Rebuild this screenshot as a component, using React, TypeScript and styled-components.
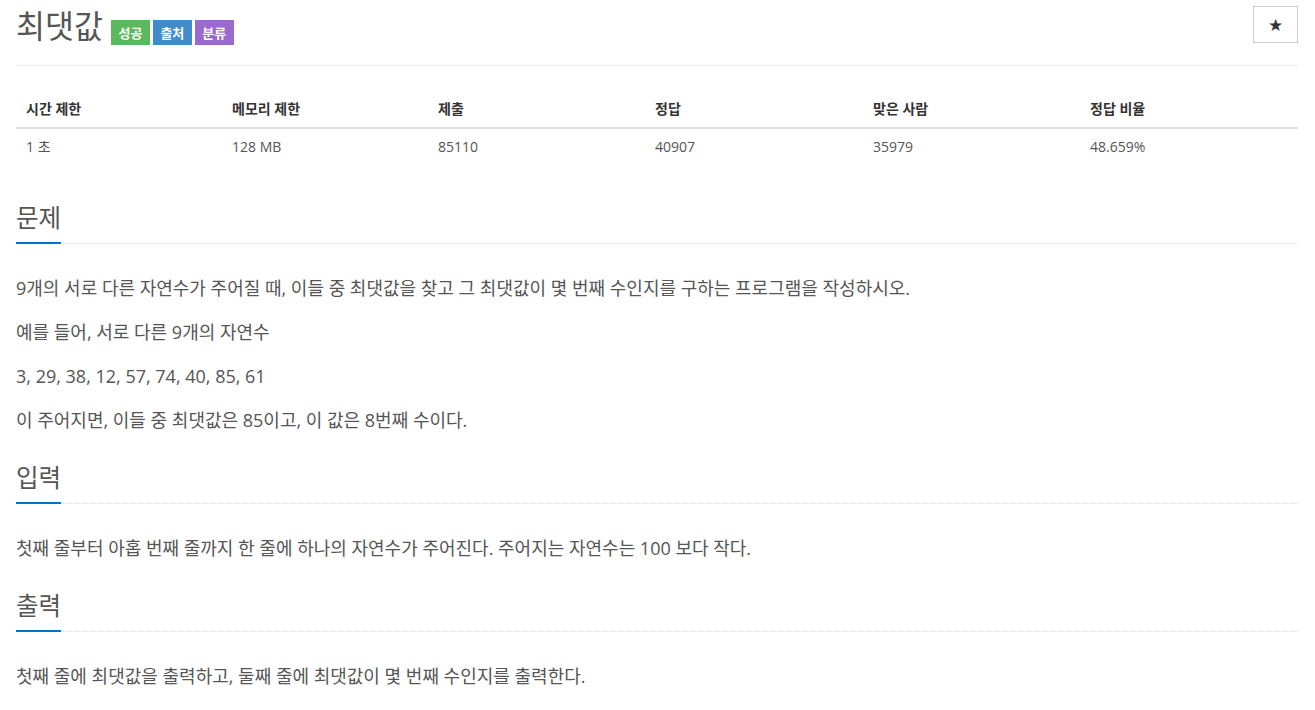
import React from 'react';
import styled, { createGlobalStyle } from 'styled-components';

const GlobalStyle = createGlobalStyle`
  html, body {
    margin: 0;
    padding: 0;
    background: #fff;
  }
  body {
    font-family: "Open Sans", "Noto Sans CJK KR", sans-serif;
    color: #555;
  }
`;

const Page = styled.div`
  display: flex;
  flex-direction: column;
  padding: 6px 17px 0 16px;
`;

const PageHeader = styled.div`
  display: flex;
  justify-content: space-between;
  align-items: flex-start;
  height: 59px;
  border-bottom: 1px solid #eee;
`;

const TitleRow = styled.div`
  display: flex;
  align-items: flex-start;
  gap: 3px;
`;

const Title = styled.h1`
  margin: 0 5px 0 0;
  font-size: 31.5px;
  font-weight: 400;
  line-height: 40px;
  color: #555;
`;

const Badge = styled.span<{ $color: string }>`
  display: inline-flex;
  align-items: center;
  justify-content: center;
  margin-top: 14px;
  height: 25px;
  padding: 0 7.5px;
  background: ${({ $color }) => $color};
  color: #fff;
  font-size: 13px;
  font-weight: 700;
`;

const StarButton = styled.button`
  width: 45px;
  height: 37px;
  padding: 0;
  border: 1px solid #ccc;
  border-radius: 0;
  background: #fff;
  color: #333;
  font-family: "DejaVu Sans", sans-serif;
  font-size: 17px;
  cursor: pointer;
`;

const Table = styled.div`
  display: grid;
  grid-template-columns: 206fr 206fr 217fr 218fr 217fr 218fr;
  margin-top: 25px;
  font-size: 14px;
  line-height: 20px;
`;

const HeadCell = styled.div`
  padding: 8px 10px;
  border-bottom: 2px solid #ddd;
  font-weight: 700;
  color: #333;
`;

const Cell = styled.div`
  padding: 8px 10px;
  color: #555;
`;

const Section = styled.section<{ $gap: number }>`
  display: flex;
  flex-direction: column;
  margin-top: ${({ $gap }) => $gap}px;
`;

const Headline = styled.div`
  border-bottom: 1px dotted #ddd;
`;

const SectionTitle = styled.h2`
  display: inline-block;
  margin: 0 0 -1px 0;
  padding-bottom: 11px;
  border-bottom: 2px solid #0076c0;
  font-size: 24.5px;
  font-weight: 400;
  line-height: 26px;
  color: #555;
`;

const SectionBody = styled.div`
  display: flex;
  flex-direction: column;
  gap: 14px;
  margin-top: 29px;
`;

const Para = styled.p`
  margin: 0;
  font-size: 18px;
  line-height: 30px;
  color: #555;
`;

const stats = [
  ['시간 제한', '1 초'],
  ['메모리 제한', '128 MB'],
  ['제출', '85110'],
  ['정답', '40907'],
  ['맞은 사람', '35979'],
  ['정답 비율', '48.659%'],
];

const sections = [
  {
    title: '문제',
    gap: 40,
    paras: [
      '9개의 서로 다른 자연수가 주어질 때, 이들 중 최댓값을 찾고 그 최댓값이 몇 번째 수인지를 구하는 프로그램을 작성하시오.',
      '예를 들어, 서로 다른 9개의 자연수',
      '3, 29, 38, 12, 57, 74, 40, 85, 61',
      '이 주어지면, 이들 중 최댓값은 85이고, 이 값은 8번째 수이다.',
    ],
  },
  {
    title: '입력',
    gap: 30,
    paras: ['첫째 줄부터 아홉 번째 줄까지 한 줄에 하나의 자연수가 주어진다. 주어지는 자연수는 100 보다 작다.'],
  },
  {
    title: '출력',
    gap: 30,
    paras: ['첫째 줄에 최댓값을 출력하고, 둘째 줄에 최댓값이 몇 번째 수인지를 출력한다.'],
  },
];

const App: React.FC = () => {
  return (
    <>
      <GlobalStyle />
      <Page>
        <PageHeader>
          <TitleRow>
            <Title>최댓값</Title>
            <Badge $color="#5cb85c">성공</Badge>
            <Badge $color="#428bca">출처</Badge>
            <Badge $color="#9b6acd">분류</Badge>
          </TitleRow>
          <StarButton>★</StarButton>
        </PageHeader>

        <Table>
          {stats.map(([label]) => (
            <HeadCell key={label}>{label}</HeadCell>
          ))}
          {stats.map(([label, value]) => (
            <Cell key={label}>{value}</Cell>
          ))}
        </Table>

        {sections.map((s) => (
          <Section key={s.title} $gap={s.gap}>
            <Headline>
              <SectionTitle>{s.title}</SectionTitle>
            </Headline>
            <SectionBody>
              {s.paras.map((p, i) => (
                <Para key={i}>{p}</Para>
              ))}
            </SectionBody>
          </Section>
        ))}
      </Page>
    </>
  );
};

export default App;
